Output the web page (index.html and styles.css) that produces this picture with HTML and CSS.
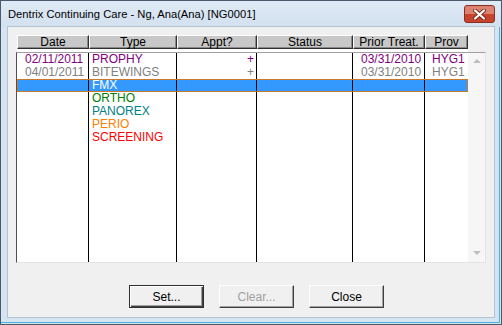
FILE: index.html
```html
<!DOCTYPE html>
<html lang="en">
<head>
  <meta charset="UTF-8" />
  <title>Dentrix Continuing Care</title>
  <link rel="stylesheet" href="styles.css">
</head>
<body>
  <div class="window">
    <div class="titlebar">
      <span class="title">Dentrix Continuing Care - Ng, Ana(Ana) [NG0001]</span>
      <div class="close-box">
        <span class="close-top"></span>
        <svg class="close-x" width="13" height="11" viewBox="0 0 13 11">
          <path d="M2 1.5 L11 9.5 M11 1.5 L2 9.5" stroke="#7a2a1c" stroke-width="4" stroke-linecap="round"/>
          <path d="M2 1.5 L11 9.5 M11 1.5 L2 9.5" stroke="#ffffff" stroke-width="2.2" stroke-linecap="round"/>
        </svg>
      </div>
    </div>

    <div class="client">
      <div class="list">
        <div class="list-head">
          <div class="hcell">Date</div>
          <div class="hcell">Type</div>
          <div class="hcell">Appt?</div>
          <div class="hcell">Status</div>
          <div class="hcell">Prior Treat.</div>
          <div class="hcell">Prov</div>
        </div>

        <div class="list-body">
          <div class="rows">
            <div class="row c-purple">
              <div class="cell">02/11/2011</div>
              <div class="cell">PROPHY</div>
              <div class="cell right">+</div>
              <div class="cell"></div>
              <div class="cell">03/31/2010</div>
              <div class="cell">HYG1</div>
            </div>
            <div class="row c-gray">
              <div class="cell">04/01/2011</div>
              <div class="cell">BITEWINGS</div>
              <div class="cell right">+</div>
              <div class="cell"></div>
              <div class="cell">03/31/2010</div>
              <div class="cell">HYG1</div>
            </div>
            <div class="row selected">
              <div class="cell"></div>
              <div class="cell">FMX</div>
              <div class="cell"></div>
              <div class="cell"></div>
              <div class="cell"></div>
              <div class="cell"></div>
            </div>
            <div class="row c-green">
              <div class="cell"></div>
              <div class="cell">ORTHO</div>
              <div class="cell"></div>
              <div class="cell"></div>
              <div class="cell"></div>
              <div class="cell"></div>
            </div>
            <div class="row c-teal">
              <div class="cell"></div>
              <div class="cell">PANOREX</div>
              <div class="cell"></div>
              <div class="cell"></div>
              <div class="cell"></div>
              <div class="cell"></div>
            </div>
            <div class="row c-orange">
              <div class="cell"></div>
              <div class="cell">PERIO</div>
              <div class="cell"></div>
              <div class="cell"></div>
              <div class="cell"></div>
              <div class="cell"></div>
            </div>
            <div class="row c-red">
              <div class="cell"></div>
              <div class="cell">SCREENING</div>
              <div class="cell"></div>
              <div class="cell"></div>
              <div class="cell"></div>
              <div class="cell"></div>
            </div>
            <div class="row filler">
              <div class="cell"></div>
              <div class="cell"></div>
              <div class="cell"></div>
              <div class="cell"></div>
              <div class="cell"></div>
              <div class="cell"></div>
            </div>
          </div>

          <div class="scrollbar">
            <span class="arrow up"></span>
            <span class="arrow down"></span>
          </div>
        </div>
      </div>

      <div class="buttons">
        <button class="btn default">Set...</button>
        <button class="btn" disabled>Clear...</button>
        <button class="btn">Close</button>
      </div>
    </div>
  </div>
</body>
</html>
```

FILE: styles.css
```css
body {
  margin: 0;
  background: #fff;
  font-family: "Liberation Sans", Arial, sans-serif;
}

.window {
  width: 502px;
  height: 325px;
  box-sizing: border-box;
  border: 1px solid #4a5a6b;
  background: #d6e3f0;
  box-shadow: inset -1px -1px 0 #d6e3f0, inset -2px -2px 0 #4cb3d8;
  display: flex;
  flex-direction: column;
}

.titlebar {
  height: 26px;
  display: flex;
  align-items: flex-start;
  justify-content: space-between;
  background: linear-gradient(#dfeaf6, #d3e0ee);
}

.title {
  font-size: 11.2px;
  color: #000;
  margin: 6px 0 0 7px;
  line-height: 14px;
}

/* caption close button, Win7 basic red */
.close-box {
  position: relative;
  width: 31px;
  height: 18px;
  margin: 4px 6px 0 0;
  box-sizing: border-box;
  border: 1px solid #8b2f22;
  border-radius: 3px;
  background: #c7432b;
  display: flex;
  align-items: center;
  justify-content: center;
  overflow: hidden;
}

.close-top {
  position: absolute;
  left: 0;
  right: 0;
  top: 0;
  height: 8px;
  background: #dc8270;
}

.close-x {
  position: relative;
}

.client {
  height: 290px;
  margin: 0 7px;
  background: #f0f0f0;
  box-shadow: 0 0 0 1px #b3c3d6;
  display: flex;
  flex-direction: column;
}

.list {
  margin: 7px 8px 0 8px;
  display: flex;
  flex-direction: column;
}

.list-head {
  display: grid;
  grid-template-columns: 72px 88px 80px 96px 72px 43px;
  width: 451px;
  margin: 1px 0 0 1px;
  padding-bottom: 3px;
  background: #fff;
}

.hcell {
  height: 14px;
  box-sizing: border-box;
  border: 1px solid;
  border-color: #fff #303030 #303030 #fff;
  box-shadow: inset -1px -1px 0 #8a8a8a;
  background: #c8c8c8;
  font-size: 12px;
  line-height: 12px;
  text-align: center;
  color: #000;
}

.list-body {
  height: 211px;
  width: 470px;
  box-sizing: border-box;
  border: 1px solid;
  border-color: #a0a0a0 #e4e4e4 #e4e4e4 #505050;
  background: #fff;
  display: flex;
}

.rows {
  width: 451px;
  display: flex;
  flex-direction: column;
}

.row {
  display: grid;
  grid-template-columns: 72px 88px 80px 96px 72px 43px;
  height: 13px;
  font-size: 12px;
  line-height: 13px;
}

.row.filler {
  flex: 1;
  height: auto;
}

.cell {
  border-right: 1px solid #000;
  padding-left: 3px;
  white-space: nowrap;
  overflow: hidden;
}

.cell:first-child {
  padding-left: 8px;
}

.cell:last-child {
  border-right: none;
  padding-left: 7px;
}

.cell:nth-child(5) {
  padding-left: 8px;
}

.cell.right {
  text-align: right;
  padding-right: 2px;
}

.row.selected {
  background: #3399ff;
  color: #fff;
  outline: 1px solid #c97a2c;
  outline-offset: -1px;
}

.c-purple { color: #800080; }
.c-gray { color: #808080; }
.c-green { color: #008000; }
.c-teal { color: #008080; }
.c-orange { color: #ff8000; }
.c-red { color: #ff0000; }

.scrollbar {
  width: 17px;
  background: #f6f6f6;
  display: flex;
  flex-direction: column;
  justify-content: space-between;
  align-items: center;
  padding: 6px 0 7px 0;
}

.arrow {
  width: 0;
  height: 0;
  border-left: 4px solid transparent;
  border-right: 4px solid transparent;
}

.arrow.up {
  border-bottom: 4px solid #bdbdbd;
}

.arrow.down {
  border-top: 4px solid #bdbdbd;
}

.buttons {
  display: flex;
  gap: 15px;
  margin: 22px 0 0 121px;
}

.btn {
  width: 75px;
  height: 23px;
  box-sizing: border-box;
  padding: 0;
  font-family: "Liberation Sans", Arial, sans-serif;
  font-size: 12px;
  color: #000;
  background: #f0f0f0;
  border: 1px solid;
  border-color: #fff #404040 #404040 #fff;
  box-shadow: inset -1px -1px 0 #a0a0a0;
}

.btn.default {
  border: 1px solid #303030;
  box-shadow: inset 1px 1px 0 #fff, inset -1px -1px 0 #404040, inset -2px -2px 0 #a0a0a0;
}

.btn:disabled {
  color: #a0a0a0;
}
```
